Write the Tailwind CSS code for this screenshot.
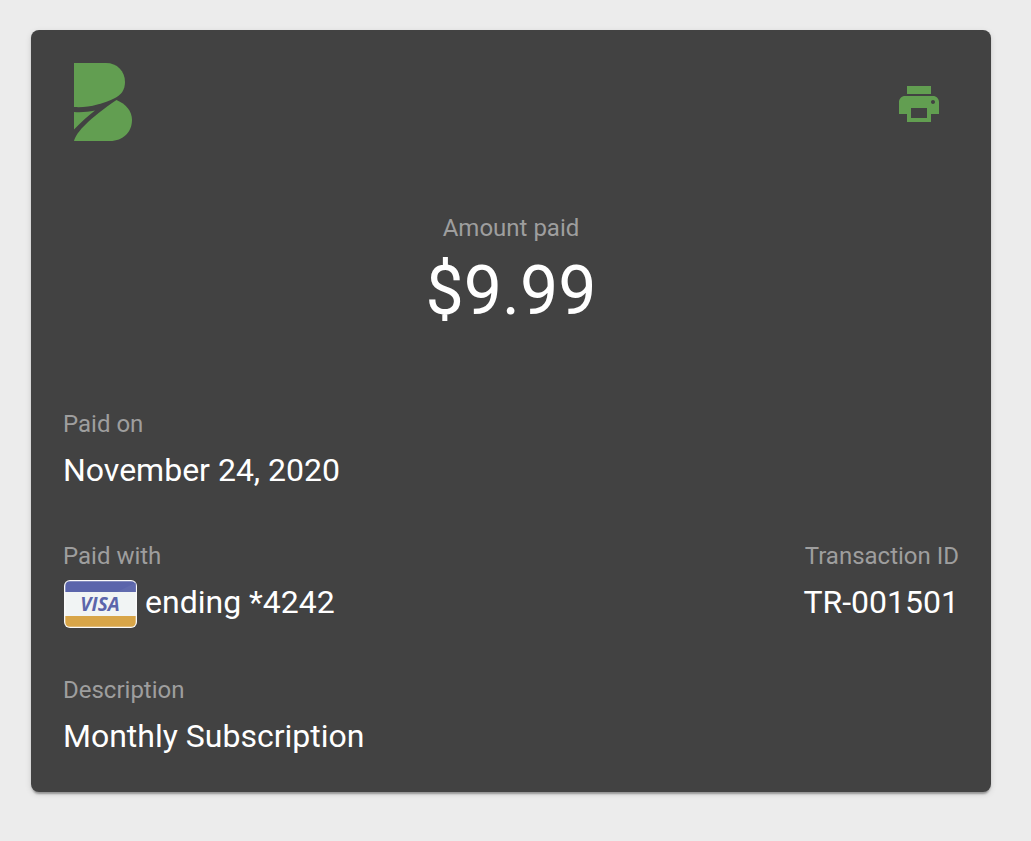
<!DOCTYPE html>
<html lang="en">
<head>
  <meta charset="UTF-8">
  <meta name="viewport" content="width=device-width, initial-scale=1.0">
  <title>Receipt</title>
  <script src="https://cdn.jsdelivr.net/npm/@tailwindcss/browser@4"></script>
</head>
<body class="min-h-screen bg-[#ececec] font-[Roboto,sans-serif] text-white">
  <main class="py-[30px] pr-10 pl-[31px]">
    <article class="rounded-lg bg-[#424242] p-8 shadow-[0_4px_2px_-2px_rgba(0,0,0,0.2),0_2px_2px_rgba(0,0,0,0.14),0_2px_6px_rgba(0,0,0,0.12)]">
      <header class="flex items-start justify-between">
        <svg class="size-20" viewBox="0 0 80 80" fill="#629e51" role="img" aria-label="Logo">
          <path d="M11 1H43C54 1 62 9 62 20C62 28 58 33 52 36C40 42 25 46 11 45Z"/>
          <path d="M11 50C18 50.500 25 50 32 48.500C25 54 18 60 11 67.500Z"/>
          <path d="M53.500 38C63 42 69 49 69 58C69 70 60 79 47 79H11C13 70 27 56 53.500 38Z"/>
        </svg>
        <button type="button" aria-label="Print" class="cursor-pointer px-4 py-[18px]">
          <svg class="size-12" viewBox="0 0 24 24" fill="#629e51">
            <path d="M19 8H5c-1.660 0-3 1.340-3 3v6h4v4h12v-4h4v-6c0-1.660-1.340-3-3-3zm-3 11H8v-5h8v5zm3-7c-.550 0-1-.450-1-1s.450-1 1-1 1 .450 1 1-.450 1-1 1zm-1-9H6v4h12V3z"/>
          </svg>
        </button>
      </header>

      <section class="mt-16 flex flex-col items-center gap-1">
        <h2 class="text-2xl leading-9 text-[#9e9e9e]">Amount paid</h2>
        <p class="text-[68px] leading-[82px]">$9.99</p>
      </section>

      <dl class="mt-[74px] flex flex-col gap-11">
        <div class="flex flex-col gap-1">
          <dt class="text-2xl leading-9 text-[#9e9e9e]">Paid on</dt>
          <dd class="text-[32px] leading-12">November 24, 2020</dd>
        </div>
        <div class="flex justify-between">
          <div class="flex flex-col gap-1">
            <dt class="text-2xl leading-9 text-[#9e9e9e]">Paid with</dt>
            <dd class="flex items-start gap-2 text-[32px] leading-12">
              <svg class="mt-0.5 h-12 w-[74px]" viewBox="0 0 74 48" role="img" aria-label="Visa card">
                <rect x="1" width="73" height="48" rx="6" fill="#fafafa"/>
                <path d="M2.500 12H72.500V36H2.500Z" fill="#f1f4f4"/>
                <path d="M2.300 12V6Q2.300 1.300 7 1.300H68Q72.700 1.300 72.700 6V12Z" fill="#5b65ab"/>
                <path d="M2.300 36V42Q2.300 46.700 7 46.700H68Q72.700 46.700 72.700 42V36Z" fill="#d8a548"/>
                <path d="M54 12L72.700 2.500V12Z" fill="#616bae"/>
                <text x="37" y="31" text-anchor="middle" fill="#5b65ab" class="font-['Open_Sans',sans-serif] text-[19px] font-bold italic">VISA</text>
              </svg>
              <span>ending *4242</span>
            </dd>
          </div>
          <div class="flex flex-col gap-1 text-right">
            <dt class="text-2xl leading-9 text-[#9e9e9e]">Transaction ID</dt>
            <dd class="text-[32px] leading-12">TR-001501</dd>
          </div>
        </div>
        <div class="flex flex-col gap-1">
          <dt class="text-2xl leading-9 text-[#9e9e9e]">Description</dt>
          <dd class="text-[32px] leading-12">Monthly Subscription</dd>
        </div>
      </dl>
    </article>
  </main>
</body>
</html>
